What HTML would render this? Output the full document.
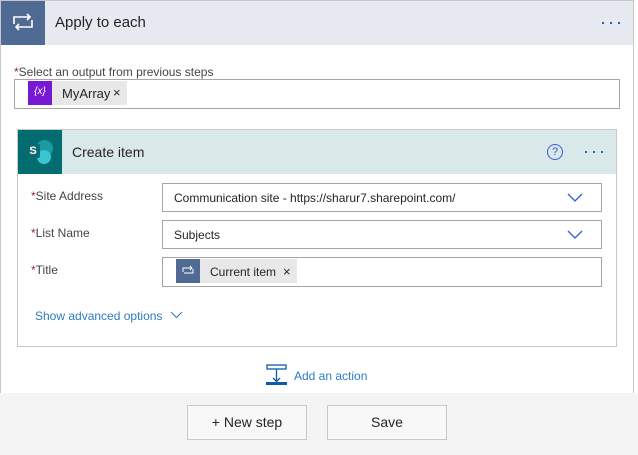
<!DOCTYPE html>
<html><head><style>
*{box-sizing:border-box;margin:0;padding:0}
body{width:638px;height:455px;background:#fff;font-family:"Liberation Sans",sans-serif;position:relative;overflow:hidden;color:#252423}
.a{position:absolute}
.req{color:#a4262c}
.lbl{font-size:12px;color:#444}
.inp{position:absolute;border:1px solid #a6a6a6;background:#fff}
.dots{position:absolute;display:flex;gap:6px}
.dots i{width:2px;height:2px;background:#0f6cbd}
</style></head><body>
<div class="a" style="left:0;top:0;width:634px;height:393px;border:1px solid #c8c8c8;border-bottom:none"></div>
<div class="a" style="left:1px;top:1px;width:632px;height:44px;background:#e6e9ef"></div>
<div class="a" style="left:1px;top:1px;width:44px;height:44px;background:#4f6b93"></div>
<svg class="a" style="left:12px;top:12px" width="22" height="20" viewBox="0 0 22 20" fill="none" stroke="#fff" stroke-width="1.6"><path d="M2 12V5h16M15 2l3 3-3 3M20 8v7H4M7 18l-3-3 3-3"/></svg>
<div class="a" style="left:55px;top:14px;font-size:15px">Apply to each</div>
<div class="dots" style="left:602px;top:22px"><i></i><i></i><i></i></div>
<div class="a lbl" style="left:14px;top:65px"><span class="req">*</span>Select an output from previous steps</div>
<div class="inp" style="left:14px;top:79px;width:606px;height:30px"></div>
<div class="a" style="left:28px;top:81px;width:99px;height:24px;background:#e8e8e8"></div>
<div class="a" style="left:28px;top:81px;width:24px;height:24px;background:#7719d4;color:#fff;font-size:10px;text-align:center;line-height:22px;font-style:italic">{x}</div>
<div class="a" style="left:62px;top:86px;font-size:13px">MyArray</div>
<div class="a" style="left:113px;top:85px;font-size:13px">×</div>
<div class="a" style="left:17px;top:129px;width:600px;height:218px;border:1px solid #c8c8c8"></div>
<div class="a" style="left:18px;top:130px;width:598px;height:44px;background:#d9e8e8"></div>
<div class="a" style="left:18px;top:130px;width:44px;height:44px;background:#036c70"></div>
<div class="a" style="left:36px;top:140px;width:17px;height:17px;border-radius:50%;background:#1a9ba1"></div>
<div class="a" style="left:37px;top:150px;width:14px;height:14px;border-radius:50%;background:#37c6d0"></div>
<div class="a" style="left:26px;top:144px;width:14px;height:14px;border-radius:2px;background:#0b6a6f;color:#fff;font-size:11px;font-weight:bold;text-align:center;line-height:14px">S</div>
<div class="a" style="left:72px;top:144px;font-size:14px">Create item</div>
<div class="a" style="left:547px;top:144px;width:16px;height:16px;border:1px solid #3b5bdb;border-radius:50%;color:#3b5bdb;font-size:11px;text-align:center;line-height:14px">?</div>
<div class="dots" style="left:585px;top:151px"><i></i><i></i><i></i></div>
<div class="a lbl" style="left:31px;top:189px"><span class="req">*</span>Site Address</div>
<div class="a lbl" style="left:31px;top:226px"><span class="req">*</span>List Name</div>
<div class="a lbl" style="left:31px;top:263px"><span class="req">*</span>Title</div>
<div class="inp" style="left:162px;top:183px;width:440px;height:29px"></div>
<div class="a" style="left:174px;top:191px;font-size:12px">Communication site - https://sharur7.sharepoint.com/</div>
<div class="inp" style="left:162px;top:220px;width:440px;height:29px"></div>
<div class="a" style="left:174px;top:228px;font-size:12px">Subjects</div>
<svg class="a" style="left:567px;top:193px" width="16" height="10" fill="none" stroke="#2b5fd9" stroke-width="1.3"><path d="M1 1l7 7 7-7"/></svg>
<svg class="a" style="left:567px;top:230px" width="16" height="10" fill="none" stroke="#2b5fd9" stroke-width="1.3"><path d="M1 1l7 7 7-7"/></svg>
<div class="inp" style="left:162px;top:257px;width:440px;height:30px"></div>
<div class="a" style="left:176px;top:259px;width:121px;height:24px;background:#e8e8e8"></div>
<div class="a" style="left:176px;top:259px;width:24px;height:24px;background:#4f6b93"></div>
<svg class="a" style="left:182px;top:265px" width="12" height="11" fill="none" stroke="#fff" stroke-width="1"><path d="M1 7V3h9M8 1l2 2-2 2M11 4v4H2"/></svg>
<div class="a" style="left:210px;top:265px;font-size:12px">Current item</div>
<div class="a" style="left:283px;top:264px;font-size:13px">×</div>
<div class="a" style="left:35px;top:309px;font-size:12px;color:#2f7bc4">Show advanced options</div>
<svg class="a" style="left:170px;top:311px" width="13" height="8" fill="none" stroke="#2f7bc4" stroke-width="1"><path d="M1 1l5.5 5.5L12 1"/></svg>
<svg class="a" style="left:266px;top:364px" width="22" height="22" fill="none" stroke="#0f5aa8" stroke-width="1.3"><rect x="1" y="1" width="19" height="4"/><path d="M10.5 5v12M7 14l3.5 3.5L14 14"/><rect x="0" y="18" width="21" height="3" fill="#0f5aa8" stroke="none"/></svg>
<div class="a" style="left:294px;top:369px;font-size:12px;color:#2f7bc4">Add an action</div>
<div class="a" style="left:0;top:393px;width:638px;height:62px;background:#f4f4f4"></div>
<div class="a" style="left:187px;top:405px;width:120px;height:35px;border:1px solid #c8c8c8;background:#f8f8f8;font-size:14px;text-align:center;line-height:33px">+ New step</div>
<div class="a" style="left:327px;top:405px;width:120px;height:35px;border:1px solid #c8c8c8;background:#f8f8f8;font-size:14px;text-align:center;line-height:33px">Save</div>
</body></html>
